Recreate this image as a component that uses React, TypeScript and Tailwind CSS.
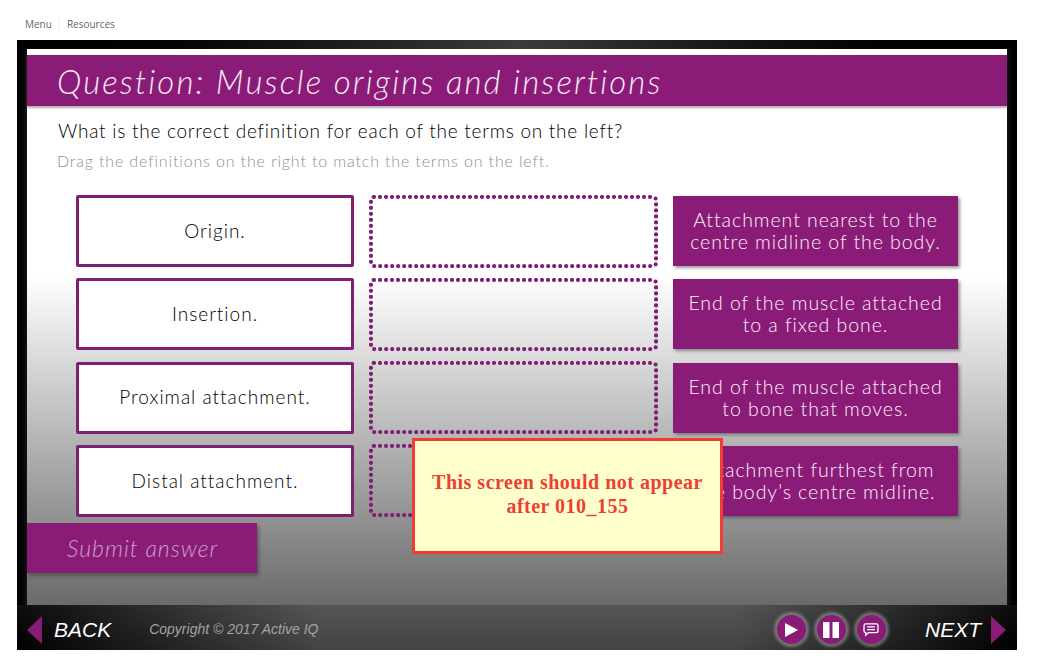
const body = '"Lato", "Liberation Sans", sans-serif';

const rows = [
  { term: "Origin.", def: ["Attachment nearest to the", "centre midline of the body."] },
  { term: "Insertion.", def: ["End of the muscle attached", "to a fixed bone."] },
  { term: "Proximal attachment.", def: ["End of the muscle attached", "to bone that moves."] },
  { term: "Distal attachment.", def: ["Attachment furthest from", "the body’s centre midline."] },
];

function RoundButton({ children }: { children: React.ReactNode }) {
  return (
    <div className="w-[29px] h-[29px] rounded-full bg-[#8a1c78] flex items-center justify-center shadow-[0_0_3px_3px_rgba(165,165,165,0.55)]">
      {children}
    </div>
  );
}

// drop target outline: browser dotted borders space their dots too far apart
function DropZone() {
  return (
    <div className="ml-[15px] w-[289px] h-[73px]">
      <svg width="289" height="73" viewBox="0 0 289 73" fill="none">
        <rect x="2" y="2" width="285" height="69" rx="3" stroke="#7f1f74" strokeWidth="4.2" strokeLinecap="round" strokeDasharray="0 6" />
      </svg>
    </div>
  );
}

export default function App() {
  return (
    <div className="w-[1045px] h-[666px] bg-white overflow-hidden relative" style={{ fontFamily: body }}>
      {/* Top links */}
      <div className="h-[40px] pl-[25px] pt-[17px] flex items-start text-[10px] leading-[14px] text-[#666] font-['Open_Sans',sans-serif]">
        <span>Menu</span>
        <span className="ml-[7px] mr-[7px] w-px h-[14px] bg-[#f2f2f2]" />
        <span>Resources</span>
      </div>

      {/* Player frame */}
      <div className="ml-[17px] w-[1000px] h-[610px] flex flex-col bg-black">
        <div className="h-[9px] shrink-0 bg-linear-to-r from-black via-[#3c3c3c] to-black" />
        <div className="flex flex-1 min-h-0">
          <div className="w-[10px] bg-linear-to-r from-black to-[#141414]" />

          {/* Slide */}
          <div className="flex-1 flex flex-col bg-[linear-gradient(to_bottom,#ffffff_0%,#ffffff_41%,#6a6a6a_100%)]">
            <div className="mt-[6px] h-[51px] shrink-0 bg-[#8a1c78] pl-[30px] pt-[2px] flex items-center shadow-[0_2px_2px_rgba(120,110,110,0.55)]">
              <h1 className="text-[33px] italic font-light tracking-[2.1px] text-[#f8e9f6]">
                Question: Muscle origins and insertions
              </h1>
            </div>

            <p className="mt-[13px] pl-[31px] text-[19px] leading-[24px] tracking-[0.75px] font-light text-black">
              What is the correct definition for each of the terms on the left?
            </p>
            <p className="mt-[8px] pl-[30px] text-[16px] leading-[20px] tracking-[0.85px] font-light text-[#8f8f8f]">
              Drag the definitions on the right to match the terms on the left.
            </p>

            <div className="mt-[24px] pl-[49px] flex flex-col gap-[11.33px]">
              {rows.map((r) => (
                <div key={r.term} className="flex items-center h-[72px]">
                  <div className="w-[278px] h-[72px] border-[3px] border-[#7f1f74] rounded-[2px] bg-white flex items-center justify-center text-[19px] tracking-[1px] font-light text-black">
                    {r.term}
                  </div>
                  <DropZone />
                  <div className="ml-[15px] w-[285px] h-[70px] bg-[#8a1c78] flex flex-col items-center justify-center text-[19.5px] leading-[22px] tracking-[0.95px] font-light text-[#fff0fc] shadow-[2px_2px_3px_rgba(70,70,70,0.55)]">
                    <span>{r.def[0]}</span>
                    <span>{r.def[1]}</span>
                  </div>
                </div>
              ))}
            </div>

            <div className="mt-[6px] w-[230px] h-[50px] bg-[#8a1c78] pl-[40px] flex items-center text-[23px] italic font-light tracking-[1px] text-[#c9a2c6] shadow-[2px_3px_3px_rgba(60,60,60,0.55)]">
              Submit answer
            </div>
          </div>

          <div className="w-[10px] bg-linear-to-r from-[#141414] to-black" />
        </div>

        {/* Footer bar */}
        <div className="h-[45px] shrink-0 flex items-center bg-[linear-gradient(to_bottom,rgba(255,255,255,0.05),rgba(0,0,0,0.12)),linear-gradient(to_right,#000000,#4c4c4c_30%,#4c4c4c_72%,#000000)] pl-[10px] pr-[11px] pt-[4px]">
          <svg width="15" height="28" viewBox="0 0 15 28" className="shrink-0">
            <polygon points="15,0 0,14 15,28" fill="#8a1c78" />
          </svg>
          <span className="ml-[12px] text-[21px] italic text-white font-['Liberation_Sans',sans-serif]">BACK</span>
          <span className="ml-[38px] text-[14px] italic text-[#a3a3a3] font-['Liberation_Sans',sans-serif]">
            Copyright © 2017 Active IQ
          </span>

          <div className="ml-auto flex items-center gap-[11px]">
            <RoundButton>
              <svg width="16" height="16" viewBox="0 0 16 16">
                <polygon points="2,1 15,8 2,15" fill="#ffffff" />
              </svg>
            </RoundButton>
            <RoundButton>
              <svg width="18" height="18" viewBox="0 0 18 18">
                <rect x="1" y="1" width="6.5" height="16" fill="#ffffff" />
                <rect x="10.5" y="1" width="6.5" height="16" fill="#ffffff" />
              </svg>
            </RoundButton>
            <RoundButton>
              <svg width="16" height="14" viewBox="0 0 18 16" fill="none" stroke="#ffffff" strokeWidth="1.5">
                <path d="M3 1h12a2 2 0 0 1 2 2v6a2 2 0 0 1-2 2H6l-3 3v-3a2 2 0 0 1-2-2V3a2 2 0 0 1 2-2z" />
                <path d="M4.5 4.5h9M4.5 7.5h9" />
              </svg>
            </RoundButton>
          </div>

          <span className="ml-[39px] text-[21px] italic text-white font-['Liberation_Sans',sans-serif]">NEXT</span>
          <svg width="15" height="28" viewBox="0 0 15 28" className="ml-[10px] shrink-0">
            <polygon points="0,0 15,14 0,28" fill="#8a1c78" />
          </svg>
        </div>
      </div>

      {/* Review notice lying over the slide */}
      <div className="absolute left-[412px] top-[438px] w-[311px] h-[116px] border-[3px] border-[#f13c34] bg-[#ffffcc] flex flex-col items-center pt-[29px] text-[20px] leading-[24px] font-bold tracking-[0.5px] text-[#ef3e36] font-['Liberation_Serif',serif]">
        <span>This screen should not appear</span>
        <span>after 010_155</span>
      </div>
    </div>
  );
}
